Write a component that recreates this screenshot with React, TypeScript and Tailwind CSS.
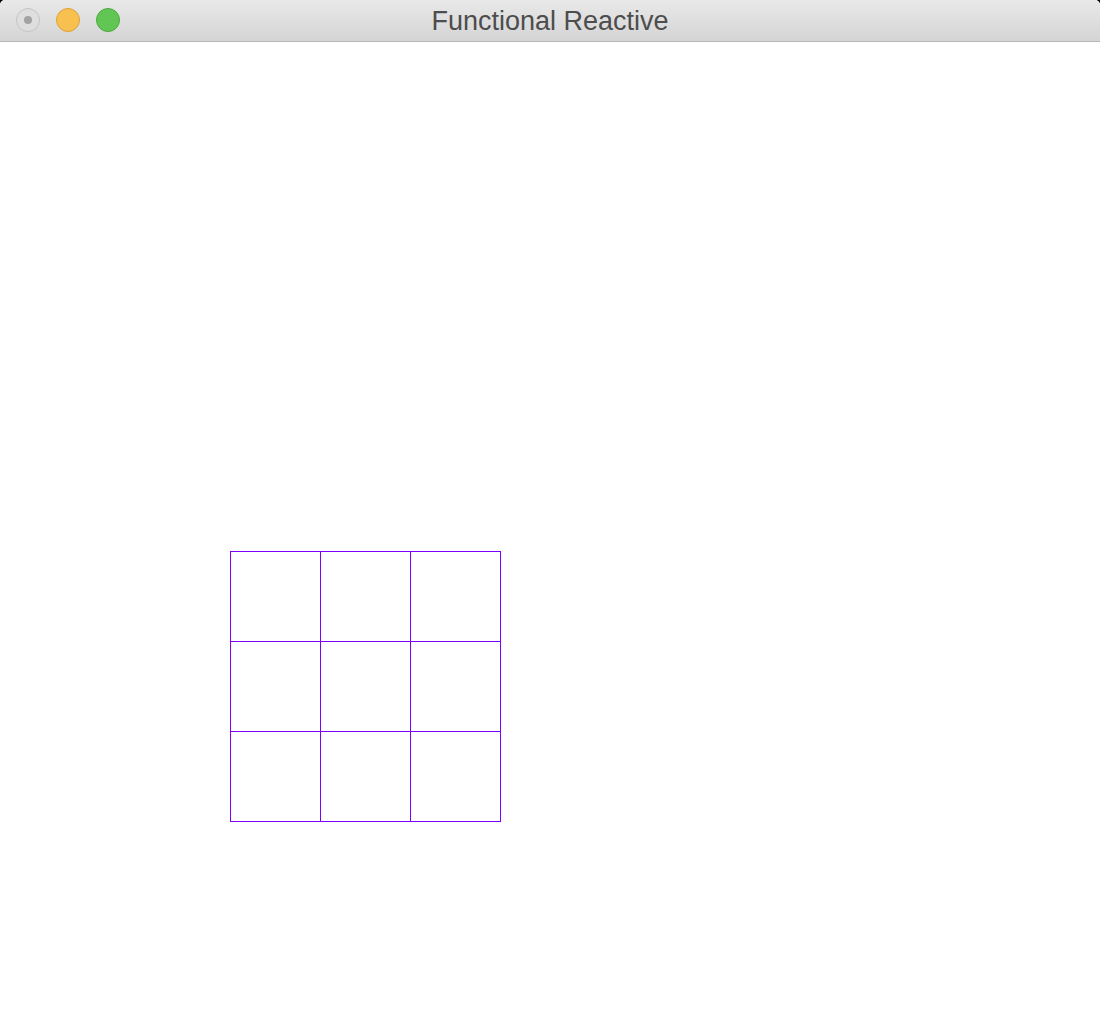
export default function App() {
  const cells = Array.from({ length: 9 });
  return (
    <div className="w-[1100px] h-[1018px] bg-black overflow-hidden">
      <div className="w-full h-full bg-white rounded-t-[5px] overflow-hidden flex flex-col">
        <div className="h-[42px] shrink-0 relative flex items-center justify-center border-b border-[#b6b6b6] bg-gradient-to-b from-[#e9e9e9] to-[#d4d4d4]">
          <div className="absolute left-[16px] top-[8px] flex gap-[16px]">
            <div className="w-[24px] h-[24px] rounded-full bg-[#dedede] border border-[#c4c4c4] flex items-center justify-center">
              <div className="w-[8px] h-[8px] rounded-full bg-[#a3a3a3]" />
            </div>
            <div className="w-[24px] h-[24px] rounded-full bg-[#f7c04f] border border-[#dda23a]" />
            <div className="w-[24px] h-[24px] rounded-full bg-[#62c655] border border-[#4ea83f]" />
          </div>
          <span
            className="text-[27px] text-[#4d4d4d] leading-none pt-[1px]"
            style={{ fontFamily: '"Liberation Sans", Arial, sans-serif' }}
          >
            Functional Reactive
          </span>
        </div>
        <div className="flex-1 pl-[230px] pt-[509px]">
          <div className="grid grid-cols-[90px_90px_90px] w-[271px] border-l border-t border-[#8000ff]">
            {cells.map((_, i) => (
              <div key={i} className="h-[90px] border-r border-b border-[#8000ff]" />
            ))}
          </div>
        </div>
      </div>
    </div>
  );
}
